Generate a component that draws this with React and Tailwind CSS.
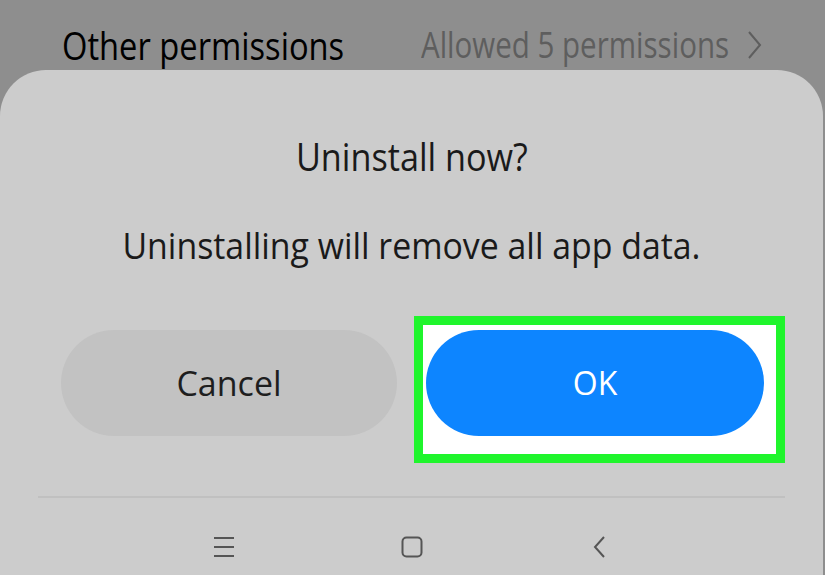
export default function App() {
  return (
    <div className="w-[825px] h-[575px] overflow-hidden bg-[#8e8e8e] flex flex-col font-['Open_Sans',sans-serif]">
      {/* Row behind the sheet */}
      <div className="h-[70px] pt-[20px] flex items-center justify-between pl-[62px] pr-[62px] shrink-0">
        <div className="w-[281px]">
          <span className="block text-[38px] leading-[50px] text-black scale-x-[0.86] origin-left whitespace-nowrap">Other permissions</span>
        </div>
        <div className="flex items-center gap-[17px] text-[#5e5e5e]">
          <div className="w-[307px]">
            <span className="block text-[36px] leading-[50px] scale-x-[0.82] origin-left whitespace-nowrap">Allowed 5 permissions</span>
          </div>
          <svg width="18" height="28" viewBox="0 0 18 28" fill="none" stroke="#5e5e5e" strokeWidth="2">
            <path d="M4 1l11 13L4 27" />
          </svg>
        </div>
      </div>

      {/* Sheet */}
      <div className="flex-1 bg-[#cccccc] rounded-t-[46px] mr-[2px] flex flex-col">
        <div className="pt-[61px] flex justify-center">
          <span className="text-[38px] leading-[50px] text-[#1a1a1a] scale-x-[0.9] whitespace-nowrap">Uninstall now?</span>
        </div>
        <div className="mt-[43px] flex justify-center">
          <span className="text-[36px] leading-[44px] text-[#1a1a1a] scale-x-[0.94] whitespace-nowrap">
            Uninstalling will remove all app data.
          </span>
        </div>

        <div className="mt-[48px] flex items-start pl-[61px]">
          <button className="mt-[14px] w-[336px] h-[106px] rounded-full bg-[#c2c2c2] text-[34px] text-[#1e1e1e]">Cancel</button>
          <div className="ml-[17px] border-[9px] border-[#1ff52c] bg-white pt-[5px] pb-[18px] pl-[3px] pr-[12px]">
            <button className="w-[338px] h-[106px] rounded-full bg-[#0d85ff] text-[32px] text-white">OK</button>
          </div>
        </div>

        <div className="mt-[33px] mx-[38px] h-[2px] bg-[#c0c0c0]" />

        <div className="flex-1 pt-[20px] flex items-center justify-center">
          <div className="w-[188px] flex justify-center">
            <svg width="24" height="22" viewBox="0 0 24 22" fill="none" stroke="#555" strokeWidth="2">
              <path d="M2 2h20M2 11h20M2 20h20" />
            </svg>
          </div>
          <div className="w-[188px] flex justify-center">
            <svg width="22" height="22" viewBox="0 0 22 22" fill="none" stroke="#555" strokeWidth="2">
              <rect x="1.5" y="1.5" width="19" height="19" rx="4" />
            </svg>
          </div>
          <div className="w-[188px] flex justify-center">
            <svg width="14" height="22" viewBox="0 0 14 22" fill="none" stroke="#555" strokeWidth="2">
              <path d="M11 1L2 11l9 10" />
            </svg>
          </div>
        </div>
      </div>
    </div>
  );
}
